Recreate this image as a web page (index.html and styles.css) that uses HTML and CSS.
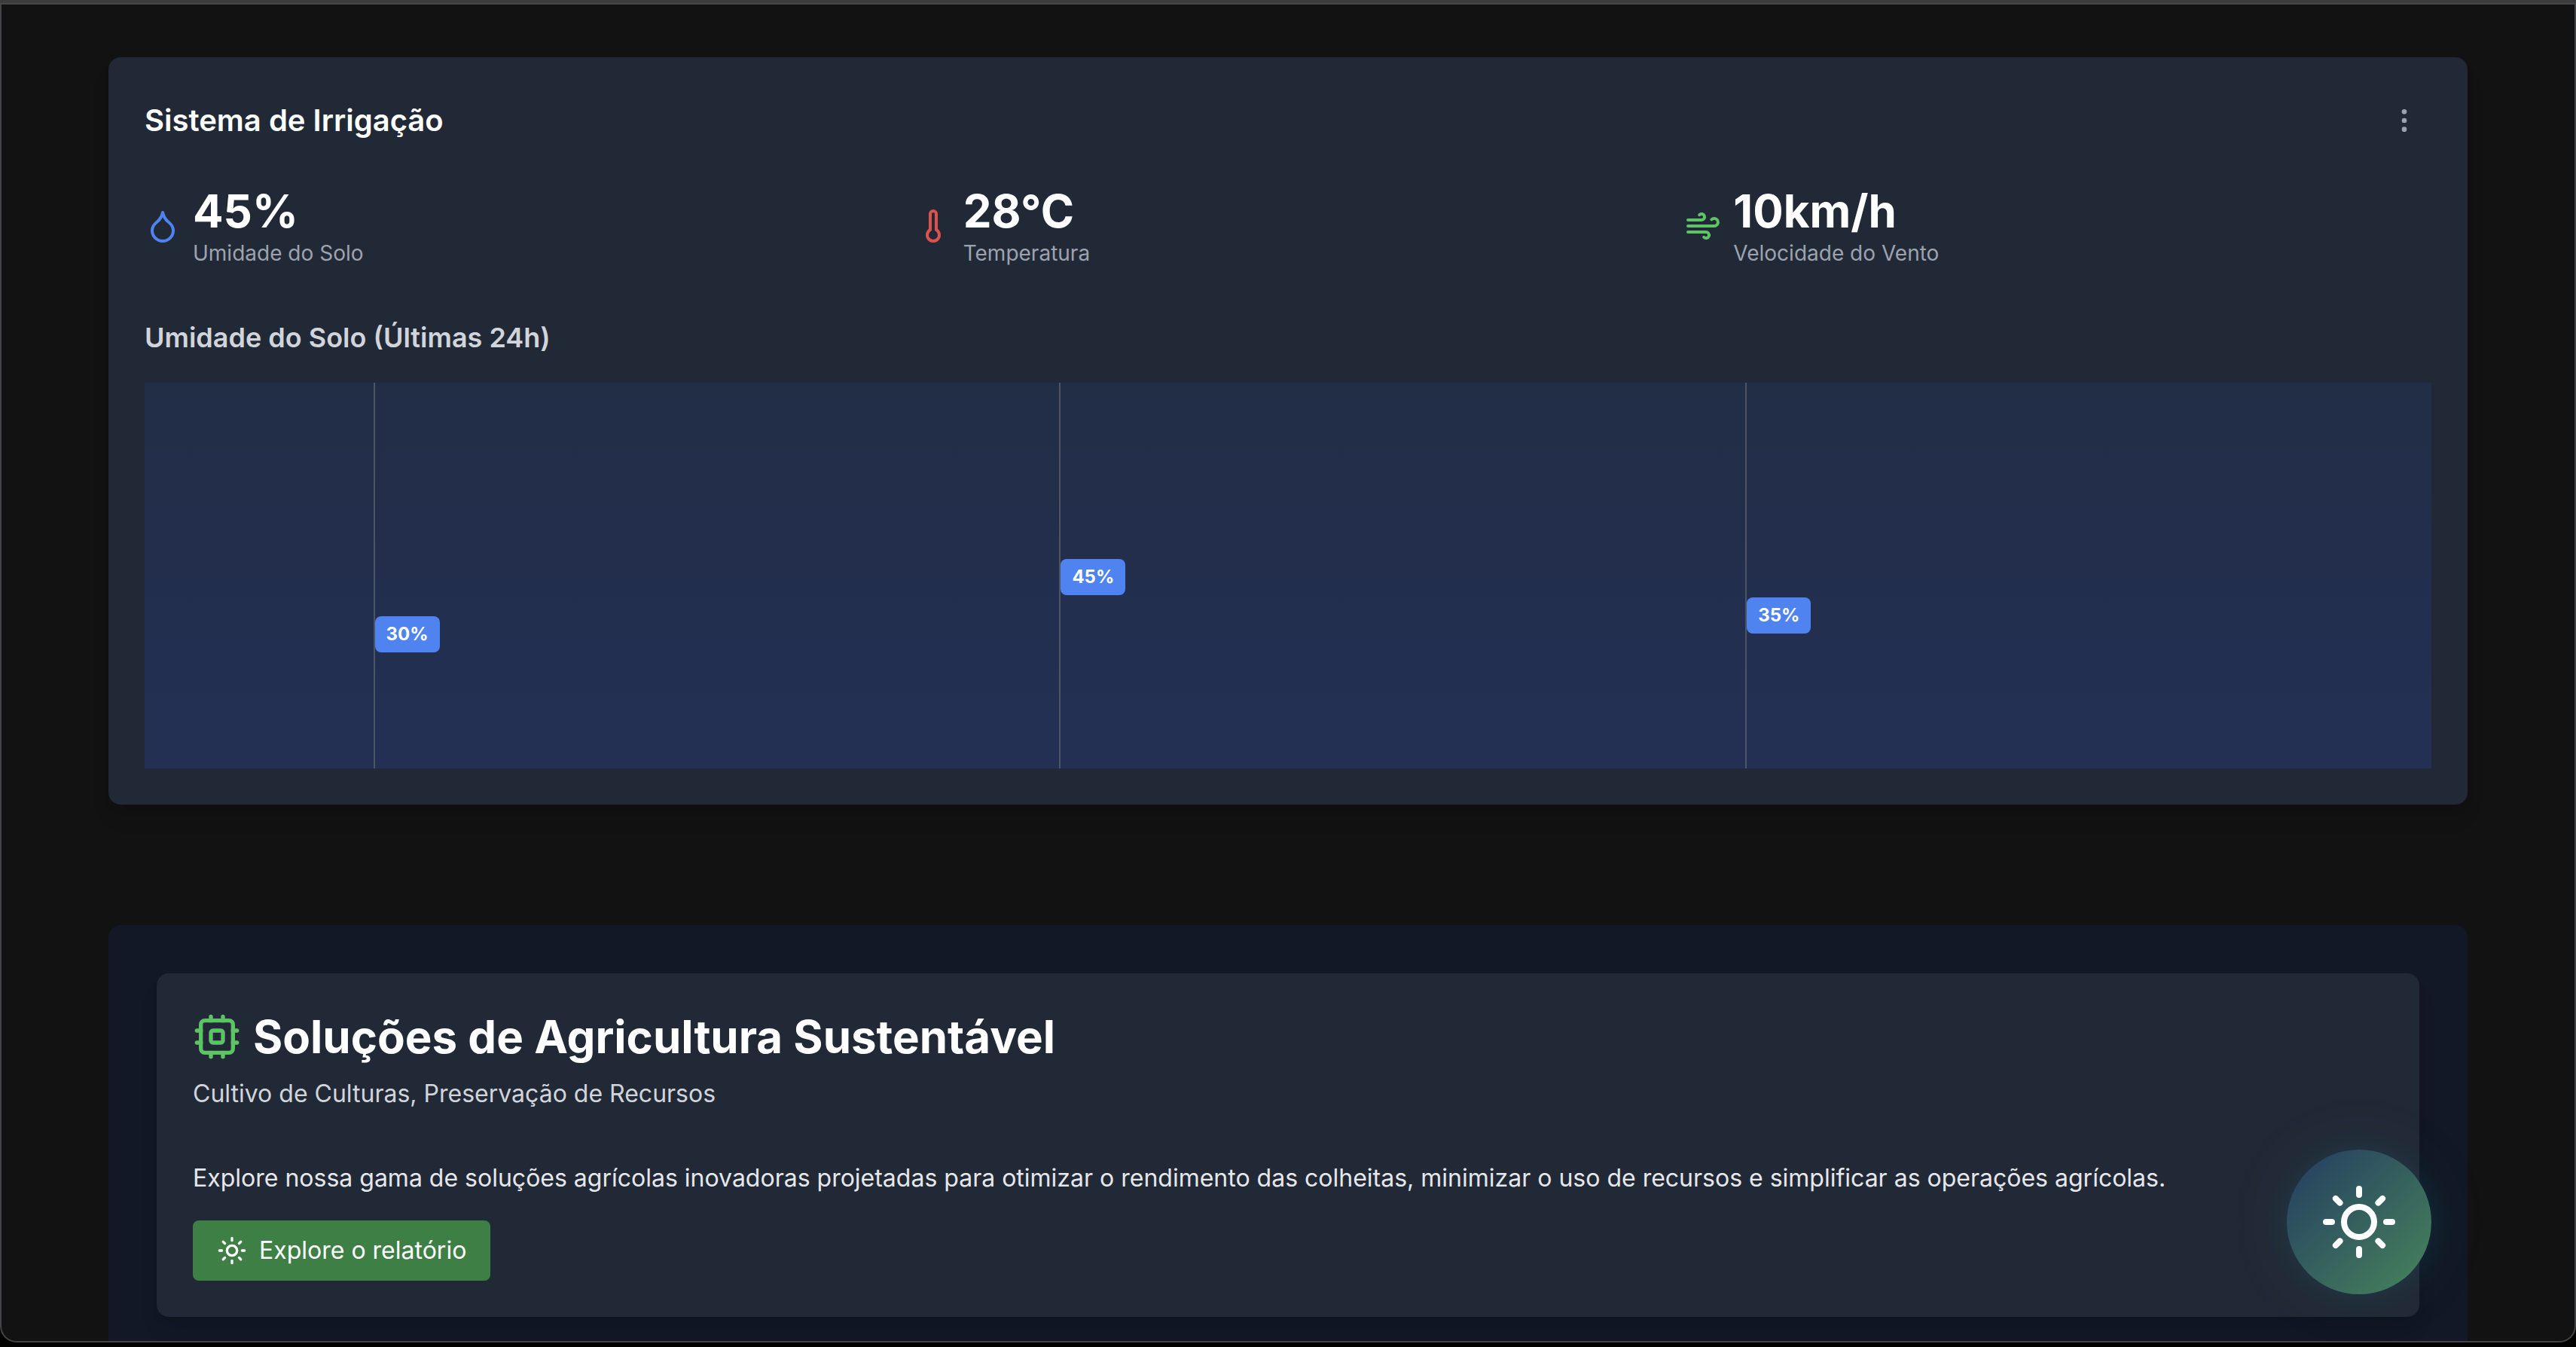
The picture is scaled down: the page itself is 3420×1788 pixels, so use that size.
FILE: index.html
```
<!DOCTYPE html>
<html lang="pt-BR">
<head>
<meta charset="utf-8">
<title>Sistema de Irrigação</title>
<link rel="stylesheet" href="styles.css">
</head>
<body>
<div class="topbar"></div>
<div class="window">
  <main class="content">
    <section class="card">
      <header class="card-header">
        <h2 class="card-title">Sistema de Irrigação</h2>
        <button class="menu-button" type="button" aria-label="Mais opções">
          <svg class="icon icon-sm" viewBox="0 0 24 24"><circle cx="12" cy="12" r="1"/><circle cx="12" cy="5" r="1"/><circle cx="12" cy="19" r="1"/></svg>
        </button>
      </header>
      <div class="stats">
        <div class="stat">
          <svg class="icon icon-md blue" viewBox="0 0 24 24"><path d="M12 22a7 7 0 0 0 7-7c0-2-1-3.9-3-5.5s-3.5-4-4-6.5c-.5 2.5-2 4.9-4 6.5C6 11.1 5 13 5 15a7 7 0 0 0 7 7z"/></svg>
          <div>
            <p class="stat-value">45%</p>
            <p class="stat-label">Umidade do Solo</p>
          </div>
        </div>
        <div class="stat">
          <svg class="icon icon-md red" viewBox="0 0 24 24"><path d="M14 4v10.54a4 4 0 1 1-4 0V4a2 2 0 0 1 4 0Z"/></svg>
          <div>
            <p class="stat-value">28°C</p>
            <p class="stat-label">Temperatura</p>
          </div>
        </div>
        <div class="stat">
          <svg class="icon icon-md green" viewBox="0 0 24 24"><path d="M17.7 7.7a2.5 2.5 0 1 1 1.8 4.3H2"/><path d="M9.6 4.6A2 2 0 1 1 11 8H2"/><path d="M12.6 19.4A2 2 0 1 0 14 16H2"/></svg>
          <div>
            <p class="stat-value">10km/h</p>
            <p class="stat-label">Velocidade do Vento</p>
          </div>
        </div>
      </div>
      <h3 class="chart-title">Umidade do Solo (Últimas 24h)</h3>
      <div class="chart">
        <div class="marker" style="left:10%"><span class="badge" style="bottom:30%">30%</span></div>
        <div class="marker" style="left:40%"><span class="badge" style="bottom:45%">45%</span></div>
        <div class="marker" style="left:70%"><span class="badge" style="bottom:35%">35%</span></div>
      </div>
    </section>

    <section class="panel">
      <article class="solution">
        <h2 class="solution-title">
          <svg class="icon icon-lg green" viewBox="0 0 24 24"><rect x="4" y="4" width="16" height="16" rx="2"/><rect x="9" y="9" width="6" height="6" rx="1"/><path d="M15 2v2M15 20v2M2 15h2M2 9h2M20 15h2M20 9h2M9 2v2M9 20v2"/></svg>
          Soluções de Agricultura Sustentável
        </h2>
        <p class="solution-subtitle">Cultivo de Culturas, Preservação de Recursos</p>
        <p class="solution-text">Explore nossa gama de soluções agrícolas inovadoras projetadas para otimizar o rendimento das colheitas, minimizar o uso de recursos e simplificar as operações agrícolas.</p>
        <button class="report-button" type="button">
          <svg class="icon icon-sm" viewBox="0 0 24 24"><circle cx="12" cy="12" r="4"/><path d="M12 2v2M12 20v2M4.93 4.93l1.41 1.41M17.66 17.66l1.41 1.41M2 12h2M20 12h2M6.34 17.66l-1.41 1.41M19.07 4.93l-1.41 1.41"/></svg>
          Explore o relatório
        </button>
      </article>
    </section>
  </main>
</div>
<button class="theme-button" type="button" aria-label="Alternar tema">
  <svg class="icon icon-xl" viewBox="0 0 24 24"><circle cx="12" cy="12" r="5"/><path d="M12 1v2M12 21v2M4.22 4.22l1.42 1.42M18.36 18.36l1.42 1.42M1 12h2M21 12h2M4.22 19.78l1.42-1.42M18.36 5.64l1.42-1.42"/></svg>
</button>
</body>
</html>
```
FILE: styles.css
```
* {
  box-sizing: border-box;
  margin: 0;
}

body {
  height: 100vh;
  overflow: hidden;
  padding-bottom: 6px;
  display: flex;
  flex-direction: column;
  background: #020201;
  color: #fff;
  font-family: Inter, "Liberation Sans", sans-serif;
  font-size: 32px;
  line-height: 48px;
}

button {
  border: 0;
  font: inherit;
  cursor: pointer;
}

.topbar {
  flex: none;
  height: 6px;
  background: #3c3c3c;
  border-bottom: 2px solid #464646;
}

.window {
  flex: 1;
  min-height: 0;
  overflow: hidden;
  background: #121212;
  border: 2px solid #434447;
  border-top: 0;
  border-radius: 0 0 22px 22px;
}

.content {
  padding: 70px 142px;
  display: flex;
  flex-direction: column;
  gap: 160px;
}

.icon {
  flex: none;
  fill: none;
  stroke: currentColor;
  stroke-width: 2;
  stroke-linecap: round;
  stroke-linejoin: round;
}

.icon-sm { width: 40px; height: 40px; }
.icon-md { width: 48px; height: 48px; }
.icon-lg { width: 64px; height: 64px; }
.icon-xl { width: 96px; height: 96px; }

.blue { color: #4f83f0; }
.red { color: #de524c; }
.green { color: #5dc466; }

.card {
  padding: 48px;
  background: #222936;
  border-radius: 16px;
  box-shadow: 0 20px 30px -6px rgba(0, 0, 0, 0.1), 0 8px 12px -4px rgba(0, 0, 0, 0.1);
}

.card-header {
  display: flex;
  justify-content: space-between;
  align-items: center;
}

.card-title {
  font-size: 40px;
  line-height: 56px;
  font-weight: 600;
}

.menu-button {
  display: flex;
  padding: 16px;
  background: none;
  color: #9ca3af;
}

.stats {
  margin: 48px 0 64px;
  display: grid;
  grid-template-columns: repeat(3, 1fr);
  gap: 32px;
}

.stat {
  display: flex;
  align-items: center;
  gap: 16px;
}

.stat-value {
  font-size: 60px;
  line-height: 72px;
  font-weight: 700;
}

.stat-label {
  font-size: 28px;
  line-height: 40px;
  color: #9ca3af;
}

.chart-title {
  margin-bottom: 32px;
  font-size: 36px;
  line-height: 56px;
  font-weight: 600;
  color: #d1d5db;
}

.chart {
  position: relative;
  height: 512px;
  background: linear-gradient(#222d46, #233054);
}

.marker {
  position: absolute;
  top: 0;
  bottom: 0;
  border-left: 2px solid #4b5563;
}

.badge {
  position: absolute;
  left: 0;
  padding: 8px 15px;
  background: #4f83f0;
  border-radius: 8px;
  font-size: 24px;
  line-height: 32px;
  font-weight: 700;
}

.panel {
  padding: 64px;
  background: #121826;
  border-radius: 16px;
}

.solution {
  padding: 48px;
  background: #222936;
  border-radius: 16px;
  box-shadow: 0 20px 30px -6px rgba(0, 0, 0, 0.1), 0 8px 12px -4px rgba(0, 0, 0, 0.1);
}

.solution-title {
  display: flex;
  align-items: center;
  gap: 16px;
  font-size: 60px;
  line-height: 72px;
  font-weight: 700;
}

.solution-subtitle {
  margin: 16px 0 64px;
  color: #d1d5db;
}

.solution-text {
  margin-bottom: 32px;
  color: #e5e7eb;
}

.report-button {
  display: flex;
  align-items: center;
  gap: 16px;
  padding: 16px 32px;
  background: #3d7f44;
  border-radius: 8px;
  color: #fff;
}

.theme-button {
  position: fixed;
  right: 192px;
  bottom: 70px;
  width: 192px;
  height: 192px;
  display: flex;
  align-items: center;
  justify-content: center;
  border-radius: 50%;
  background: linear-gradient(135deg, #243c61, #47855b);
  color: #fff;
  box-shadow: 0 0 40px rgba(40, 110, 220, 0.12), 0 0 80px rgba(40, 150, 80, 0.14);
}
```
